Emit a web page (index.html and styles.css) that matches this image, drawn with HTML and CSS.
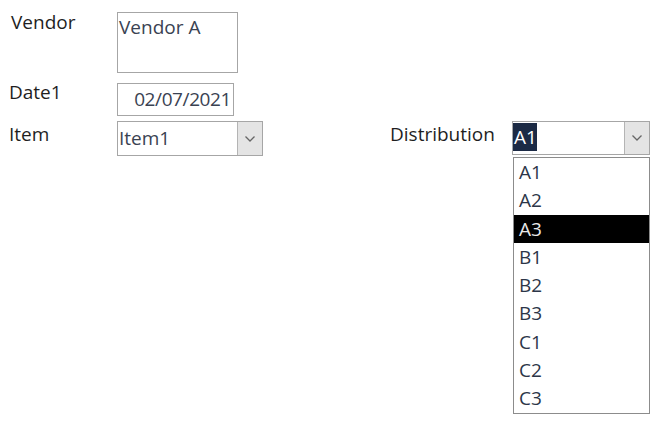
FILE: index.html
```html
<!DOCTYPE html>
<html>
<head>
<meta charset="utf-8">
<link rel="stylesheet" href="styles.css">
</head>
<body>
<div class="form">
  <div class="row row-vendor">
    <div class="label l-vendor">Vendor</div>
    <div class="box vendor-box">Vendor A</div>
  </div>
  <div class="row row-date">
    <div class="label l-date">Date1</div>
    <div class="box date-box">02/07/2021</div>
  </div>
  <div class="row row-item">
    <div class="label l-item">Item</div>
    <div class="combo item-combo">
      <div class="combo-text">Item1</div>
      <div class="combo-btn"><svg width="12" height="8" viewBox="0 0 12 8"><path d="M1.5 1.5 L6 6 L10.5 1.5" fill="none" stroke="#666" stroke-width="1.3"/></svg></div>
    </div>
    <div class="label l-dist">Distribution</div>
    <div class="dist-wrap">
      <div class="combo dist-combo">
        <div class="combo-text"><span class="sel">A1</span></div>
        <div class="combo-btn"><svg width="12" height="8" viewBox="0 0 12 8"><path d="M1.5 1.5 L6 6 L10.5 1.5" fill="none" stroke="#666" stroke-width="1.3"/></svg></div>
      </div>
      <ul class="list">
        <li>A1</li>
        <li>A2</li>
        <li class="hl">A3</li>
        <li>B1</li>
        <li>B2</li>
        <li>B3</li>
        <li>C1</li>
        <li>C2</li>
        <li>C3</li>
      </ul>
    </div>
  </div>
</div>
</body>
</html>
```
FILE: styles.css
```css
html, body {
  margin: 0;
  padding: 0;
  background: #ffffff;
}
body {
  font-family: "Open Sans", Lato, sans-serif;
  font-size: 19px;
  font-weight: 500;
  color: #262626;
  width: 659px;
  height: 427px;
  overflow: hidden;
}
.form {
  padding-top: 12px;
  display: flex;
  flex-direction: column;
}
.row {
  display: flex;
  align-items: flex-start;
}
.label {
  line-height: 20px;
  color: #1f1f1f;
}
.l-vendor {
  margin-left: 11px;
  margin-top: 0px;
  width: 106px;
}
.l-date {
  margin-left: 9px;
  margin-top: -1px;
  width: 108px;
}
.l-item {
  margin-left: 9px;
  margin-top: 3px;
  width: 108px;
}
.box {
  box-sizing: border-box;
  border: 1px solid #a6a6a6;
  color: #3a4252;
  line-height: 20px;
}
.vendor-box {
  width: 121px;
  height: 61px;
  padding: 4px 0 0 1px;
}
.row-date {
  margin-top: 10px;
}
.date-box {
  width: 117px;
  height: 33px;
  padding: 5px 2px 0 0;
  text-align: right;
  letter-spacing: -0.4px;
}
.row-item {
  margin-top: 5px;
}
.combo {
  box-sizing: border-box;
  border: 1px solid #a6a6a6;
  display: flex;
  height: 35px;
}
.combo-text {
  flex: 1;
  color: #3a4252;
  line-height: 20px;
  padding: 6px 0 0 1px;
}
.combo-btn {
  width: 24px;
  background: #e4e4e4;
  border-left: 1px solid #b4b4b4;
  display: flex;
  align-items: center;
  justify-content: center;
}
.item-combo {
  width: 146px;
}
.l-dist {
  margin-left: 127px;
  margin-top: 3px;
  width: 122px;
}
.dist-wrap {
  position: relative;
  width: 138px;
}
.dist-combo {
  width: 138px;
  height: 34px;
}
.dist-combo .combo-text {
  padding: 1px 0 0 0;
}
.sel {
  display: inline-block;
  background: #1c2a45;
  color: #ffffff;
  line-height: 28px;
  padding: 0 0 0 1px;
}
.list {
  position: absolute;
  left: 1px;
  top: 36px;
  width: 137px;
  height: 257px;
  box-sizing: border-box;
  margin: 0;
  padding: 0;
  list-style: none;
  border: 1px solid #8c8c8c;
  background: #ffffff;
}
.list li {
  height: 28.3px;
  line-height: 28px;
  padding-left: 5px;
  color: #2c3648;
}
.list li.hl {
  background: #000000;
  color: #e8e8e8;
}
```
